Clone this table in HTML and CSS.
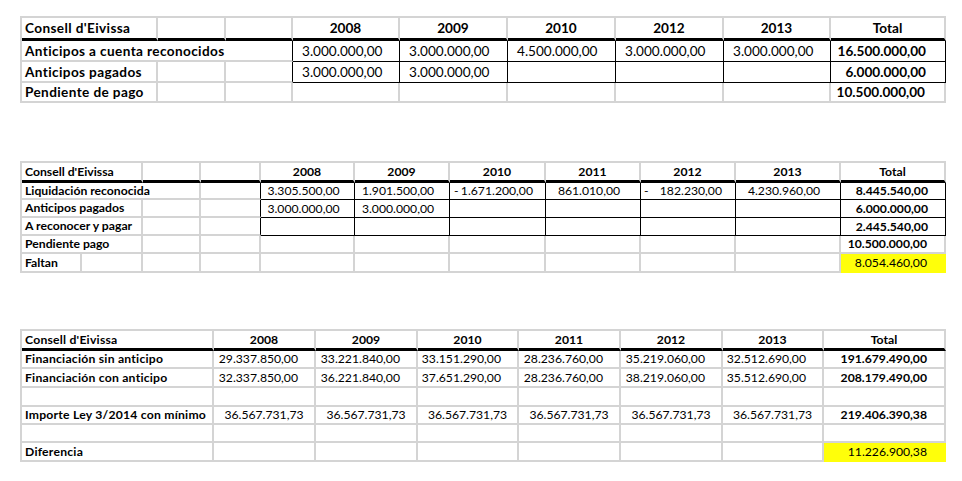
FILE: index.html
```html
<!DOCTYPE html>
<html lang="es">
<head>
<meta charset="utf-8">
<title>Consell d'Eivissa</title>
<link rel="stylesheet" href="styles.css">
</head>
<body>
<main class="page">

  <table class="sheet t1">
    <colgroup>
      <col class="w136"><col class="w68"><col class="w67"><col class="w107"><col class="w108"><col class="w108"><col class="w108"><col class="w107"><col class="w115">
    </colgroup>
    <tr class="hd h23">
      <td class="lbl">Consell d'Eivissa</td><td></td><td></td>
      <td class="yr">2008</td><td class="yr">2009</td><td class="yr">2010</td><td class="yr">2012</td><td class="yr">2013</td><td class="yr">Total</td>
    </tr>
    <tr class="h21">
      <td class="lbl bkr" colspan="3">Anticipos a cuenta reconocidos</td>
      <td class="num bk">3.000.000,00</td><td class="num bk">3.000.000,00</td><td class="num bk">4.500.000,00</td><td class="num bk">3.000.000,00</td><td class="num bk">3.000.000,00</td><td class="tot bk">16.500.000,00</td>
    </tr>
    <tr class="h21">
      <td class="lbl">Anticipos pagados</td><td></td><td class="bkr"></td>
      <td class="num bk">3.000.000,00</td><td class="num bk">3.000.000,00</td><td class="bk"></td><td class="bk"></td><td class="bk"></td><td class="tot bk">6.000.000,00</td>
    </tr>
    <tr class="h20">
      <td class="lbl">Pendiente de pago</td><td></td><td></td>
      <td></td><td></td><td></td><td></td><td></td><td class="tot">10.500.000,00</td>
    </tr>
  </table>

  <table class="sheet t2">
    <colgroup>
      <col class="w60"><col class="w61"><col class="w58"><col class="w60"><col class="w94"><col class="w95"><col class="w96"><col class="w95"><col class="w95"><col class="w105"><col class="w105">
    </colgroup>
    <tr class="hd h20">
      <td class="lbl" colspan="2">Consell d'Eivissa</td><td></td><td></td>
      <td class="yr">2008</td><td class="yr">2009</td><td class="yr">2010</td><td class="yr">2011</td><td class="yr">2012</td><td class="yr">2013</td><td class="yr">Total</td>
    </tr>
    <tr class="h17">
      <td class="lbl" colspan="3">Liquidación reconocida</td><td class="bkr"></td>
      <td class="num bk">3.305.500,00</td><td class="num bk">1.901.500,00</td>
      <td class="neg bk"><span class="minus">-</span>1.671.200,00</td>
      <td class="num bk">861.010,00</td>
      <td class="neg negb bk"><span class="minus">-</span>182.230,00</td>
      <td class="num bk">4.230.960,00</td><td class="tot bk">8.445.540,00</td>
    </tr>
    <tr class="h18">
      <td class="lbl" colspan="2">Anticipos pagados</td><td></td><td class="bkr"></td>
      <td class="num bk">3.000.000,00</td><td class="num bk">3.000.000,00</td><td class="bk"></td><td class="bk"></td><td class="bk"></td><td class="bk"></td><td class="tot bk">6.000.000,00</td>
    </tr>
    <tr class="h18">
      <td class="lbl" colspan="2">A reconocer y pagar</td><td></td><td class="bkr"></td>
      <td class="bk"></td><td class="bk"></td><td class="bk"></td><td class="bk"></td><td class="bk"></td><td class="bk"></td><td class="tot bk">2.445.540,00</td>
    </tr>
    <tr class="h18">
      <td class="lbl" colspan="2">Pendiente pago</td><td></td><td></td>
      <td></td><td></td><td></td><td></td><td></td><td></td><td class="tot">10.500.000,00</td>
    </tr>
    <tr class="h19">
      <td class="lbl">Faltan</td><td></td><td></td><td></td>
      <td></td><td></td><td></td><td></td><td></td><td></td><td class="tot reg yel">8.054.460,00</td>
    </tr>
  </table>

  <table class="sheet t3">
    <colgroup>
      <col class="w192"><col class="w102"><col class="w102"><col class="w101"><col class="w102"><col class="w102"><col class="w101"><col class="w122">
    </colgroup>
    <tr class="hd h20">
      <td class="lbl">Consell d'Eivissa</td>
      <td class="yr">2008</td><td class="yr">2009</td><td class="yr">2010</td><td class="yr">2011</td><td class="yr">2012</td><td class="yr">2013</td><td class="yr">Total</td>
    </tr>
    <tr class="h18">
      <td class="lbl">Financiación sin anticipo</td>
      <td class="num">29.337.850,00</td><td class="num">33.221.840,00</td><td class="num">33.151.290,00</td><td class="num">28.236.760,00</td><td class="num">35.219.060,00</td><td class="num">32.512.690,00</td><td class="tot">191.679.490,00</td>
    </tr>
    <tr class="h19">
      <td class="lbl">Financiación con anticipo</td>
      <td class="num">32.337.850,00</td><td class="num">36.221.840,00</td><td class="num">37.651.290,00</td><td class="num">28.236.760,00</td><td class="num">38.219.060,00</td><td class="num">35.512.690,00</td><td class="tot">208.179.490,00</td>
    </tr>
    <tr class="h19">
      <td></td><td></td><td></td><td></td><td></td><td></td><td></td><td></td>
    </tr>
    <tr class="h18">
      <td class="lbl">Importe Ley 3/2014 con mínimo</td>
      <td class="num ctr">36.567.731,73</td><td class="num ctr">36.567.731,73</td><td class="num ctr">36.567.731,73</td><td class="num ctr">36.567.731,73</td><td class="num ctr">36.567.731,73</td><td class="num ctr">36.567.731,73</td><td class="tot">219.406.390,38</td>
    </tr>
    <tr class="h18">
      <td></td><td></td><td></td><td></td><td></td><td></td><td></td><td></td>
    </tr>
    <tr class="h19">
      <td class="lbl">Diferencia</td>
      <td></td><td></td><td></td><td></td><td></td><td></td><td class="tot reg yel">11.226.900,38</td>
    </tr>
  </table>

</main>
</body>
</html>
```

FILE: styles.css
```css
* { box-sizing: border-box; }

html, body {
  margin: 0;
  padding: 0;
  background: #ffffff;
}

body {
  font-family: Lato, "Open Sans", "Liberation Sans", sans-serif;
  color: #000000;
}

.page {
  display: flex;
  flex-direction: column;
  align-items: flex-start;
  padding: 16px 0 0 20px;
}

.sheet {
  border-collapse: separate;
  border-spacing: 0;
  table-layout: fixed;
  width: 926px;
  border-top: 2px solid #d4d4d4;
  border-left: 2px solid #d4d4d4;
}

.sheet td {
  border-right: 2px solid #d4d4d4;
  border-bottom: 2px solid #d4d4d4;
  padding: 0 0 0 3px;
  white-space: nowrap;
  overflow: visible;
  vertical-align: middle;
  line-height: 14px;
}

.t1 { font-size: 13.6px; }
.t2 { font-size: 12.2px; margin-top: 58px; }
.t3 { font-size: 12.2px; margin-top: 56px; }

/* column widths */
.w58 { width: 58px; } .w60 { width: 60px; } .w61 { width: 61px; }
.w67 { width: 67px; } .w68 { width: 68px; } .w94 { width: 94px; }
.w95 { width: 95px; } .w96 { width: 96px; } .w101 { width: 101px; }
.w102 { width: 102px; } .w105 { width: 105px; } .w107 { width: 107px; }
.w108 { width: 108px; } .w115 { width: 115px; } .w122 { width: 122px; }
.w136 { width: 136px; } .w192 { width: 192px; }

/* row heights */
.h17 td { height: 17px; }
.h18 td { height: 18px; }
.h19 td { height: 19px; }
.h20 td { height: 20px; }
.h21 td { height: 21px; }
.h23 td { height: 23px; }

.sheet .hd td { border-bottom: 3px solid #000000; }

.sheet td.lbl { font-weight: 700; text-align: left; }
.t1 td.lbl { letter-spacing: 0.38px; }
.t3 td.lbl { letter-spacing: 0.22px; }

.sheet td.yr { font-weight: 700; text-align: center; padding: 0; }

.sheet td.tot { font-weight: 700; text-align: right; padding: 0 17px 0 0; }
.t1 td.tot { padding-right: 19px; }
.sheet td.reg { font-weight: 400; }

.t1 td.num { text-align: left; padding: 0 0 0 9px; }
.t2 td.num { text-align: center; padding: 0 8px 0 0; }
.t3 td.num { text-align: right; padding: 0 16px 0 0; }
.t3 td.num.ctr { text-align: center; padding: 0; }

.sheet td.neg { text-align: right; padding: 0 12px 0 4px; }
.sheet td.negb { padding: 0 13px 0 3px; }
.minus { float: left; }

/* black borders around data blocks */
.sheet td.bk {
  border-right: 1px solid #000000;
  border-bottom: 1px solid #000000;
}
.sheet td.bkr { border-right: 1px solid #000000; }

.sheet td.yel {
  background: #ffff0a;
  border-right-color: #ffff0a;
  border-bottom-color: #ffff0a;
}
```
